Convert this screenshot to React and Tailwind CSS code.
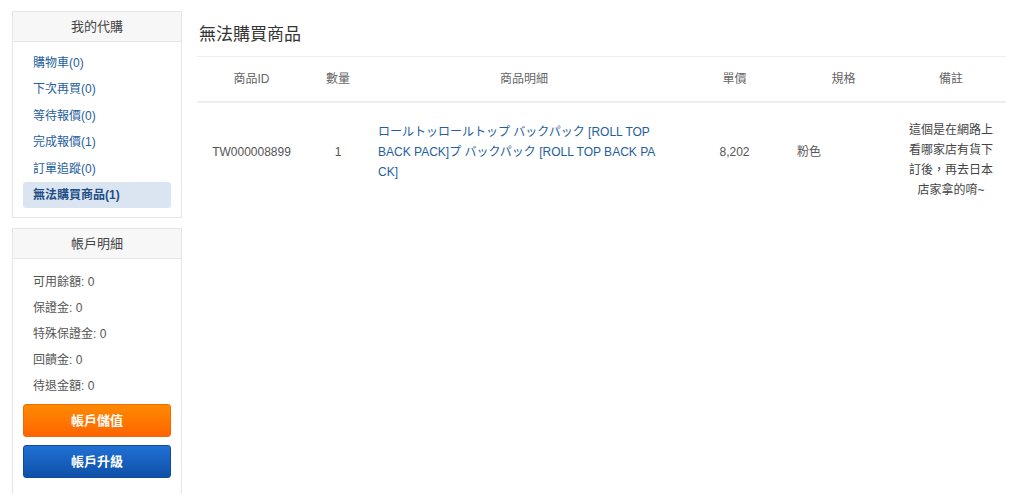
import React from 'react';

const FONT = '"Liberation Sans", "Noto Sans CJK TC", sans-serif';

const buyLinks = [
  { label: '購物車(0)' },
  { label: '下次再買(0)' },
  { label: '等待報價(0)' },
  { label: '完成報價(1)' },
  { label: '訂單追蹤(0)' },
  { label: '無法購買商品(1)', active: true },
];

const balances = ['可用餘額: 0', '保證金: 0', '特殊保證金: 0', '回饋金: 0', '待退金額: 0'];

const Panel = ({ title, children }) => (
  <div className="border border-[#e6e6e6] bg-white">
    <div className="h-[30px] bg-[#f7f7f7] border-b border-[#e6e6e6] flex items-center justify-center text-[13px] text-[#444]">
      {title}
    </div>
    {children}
  </div>
);

const App = () => {
  return (
    <div className="w-[1024px] h-[494px] overflow-hidden bg-white flex pl-[12px] pt-[11px]" style={{ fontFamily: FONT }}>
      {/* Sidebar */}
      <aside className="w-[170px] shrink-0 flex flex-col gap-[10px]">
        <Panel title="我的代購">
          <ul className="px-[10px] pt-[8px] pb-[9px]">
            {buyLinks.map((l) => (
              <li
                key={l.label}
                className={`h-[26.4px] leading-[26.4px] px-[10px] text-[12px] rounded-[3px] ${
                  l.active ? 'bg-[#dbe4f1] font-bold text-[#1e4f86]' : 'text-[#23609c]'
                }`}
              >
                {l.label}
              </li>
            ))}
          </ul>
        </Panel>

        <Panel title="帳戶明細">
          <div className="px-[10px] pt-[10px] pb-[20px]">
            {balances.map((b) => (
              <div key={b} className="h-[26px] leading-[26px] px-[10px] text-[12px] text-[#555]">
                {b}
              </div>
            ))}
            <button className="mt-[5px] w-full h-[33px] rounded-[3px] border border-[#f06a00] bg-gradient-to-b from-[#ff8a00] to-[#ff6400] text-white text-[13px] font-bold">
              帳戶儲值
            </button>
            <button className="mt-[8px] w-full h-[33px] rounded-[3px] border border-[#0d4b9c] bg-gradient-to-b from-[#2071d4] to-[#0f50a8] text-white text-[13px] font-bold">
              帳戶升級
            </button>
          </div>
        </Panel>
      </aside>

      {/* Main */}
      <main className="ml-[15px] w-[809px] pt-[12px]">
        <h1 className="text-[17px] leading-[24px] text-[#333] pb-[9px] pl-[2px] border-b border-[#eeeeee]">
          無法購買商品
        </h1>
        <table className="w-full table-fixed border-collapse text-[12px]">
          <colgroup>
            <col className="w-[109px]" />
            <col className="w-[64px]" />
            <col className="w-[308px]" />
            <col className="w-[113px]" />
            <col className="w-[105px]" />
            <col className="w-[110px]" />
          </colgroup>
          <thead>
            <tr className="h-[45px] border-b-2 border-[#eeeeee] text-[#666]">
              <th className="font-normal text-center">商品ID</th>
              <th className="font-normal text-center">數量</th>
              <th className="font-normal text-center">商品明細</th>
              <th className="font-normal text-center">單價</th>
              <th className="font-normal text-center">規格</th>
              <th className="font-normal text-center">備註</th>
            </tr>
          </thead>
          <tbody>
            <tr className="text-[#555] leading-[20px]">
              <td className="text-center align-middle">TW000008899</td>
              <td className="text-center align-middle">1</td>
              <td className="px-[8px] align-middle text-[#23609c] whitespace-nowrap">
                ロールトッロールトップ バックパック [ROLL TOP
                <br />
                BACK PACK]プ バックパック [ROLL TOP BACK PA
                <br />
                CK]
              </td>
              <td className="text-center align-middle">8,202</td>
              <td className="px-[6px] align-middle">粉色</td>
              <td className="px-[10px] pt-[17px] pb-0 text-center align-top text-[#444]">
                這個是在網路上看哪家店有貨下訂後，再去日本店家拿的唷~
              </td>
            </tr>
          </tbody>
        </table>
      </main>
    </div>
  );
};

export default App;
